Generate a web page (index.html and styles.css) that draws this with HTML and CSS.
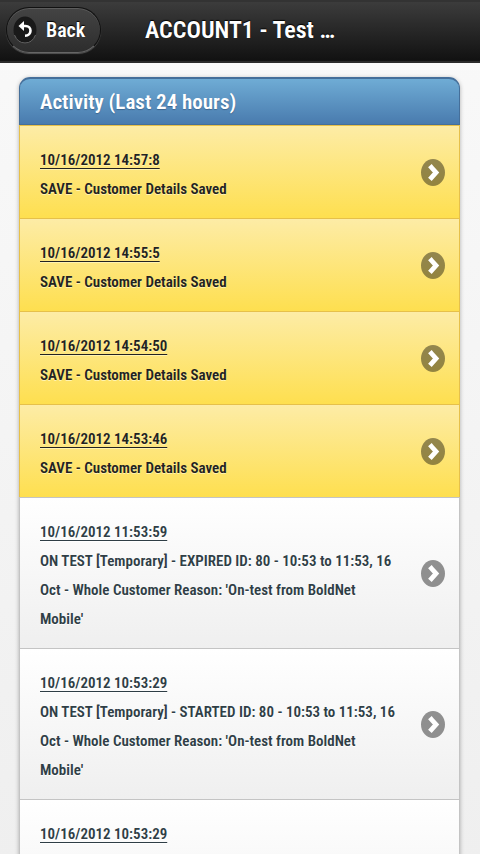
FILE: index.html
```html
<!DOCTYPE html>
<html lang="en">
<head>
  <meta charset="UTF-8">
  <meta name="viewport" content="width=device-width, initial-scale=1">
  <title>ACCOUNT1 - Test</title>
  <link rel="stylesheet" href="styles.css">
</head>
<body>

  <!-- Arrow used by every row -->
  <svg class="symbols" aria-hidden="true">
    <symbol id="arrow" viewBox="0 0 24 27">
      <ellipse cx="12" cy="13.5" rx="12" ry="13.5" fill="#000" fill-opacity="0.42"/>
      <path d="M10.5 8.5 L15 13.5 L10.5 18.5" fill="none" stroke="#fff" stroke-width="4.8" stroke-linecap="square"/>
    </symbol>
  </svg>

  <header class="header">
    <button type="button" class="back-button">
      <svg class="back-icon" viewBox="0 0 24 28" aria-hidden="true">
        <ellipse cx="12" cy="14" rx="11.5" ry="13.5" fill="#191919"/>
        <path d="M1.5 19 A11.5 13.5 0 0 0 22.5 19" fill="none" stroke="#666" stroke-width="1"/>
        <path d="M9 10 H12.5 C19 10 19.5 19.5 12 19.8" fill="none" stroke="#fff" stroke-width="2.6"/>
        <path d="M5.5 10 L11 5 V15 Z" fill="#fff"/>
      </svg>
      Back
    </button>
    <h1 class="title">ACCOUNT1 - Test …</h1>
  </header>

  <main class="content">
    <section class="list">
      <h2 class="list-header">Activity (Last 24 hours)</h2>
      <ul class="rows">
        <li>
          <a href="#" class="row warning">
            <span class="row-text"><span class="date">10/16/2012 14:57:8</span><span class="details">SAVE - Customer Details Saved</span></span>
            <svg class="arrow" aria-hidden="true"><use href="#arrow"/></svg>
          </a>
        </li>
        <li>
          <a href="#" class="row warning">
            <span class="row-text"><span class="date">10/16/2012 14:55:5</span><span class="details">SAVE - Customer Details Saved</span></span>
            <svg class="arrow" aria-hidden="true"><use href="#arrow"/></svg>
          </a>
        </li>
        <li>
          <a href="#" class="row warning">
            <span class="row-text"><span class="date">10/16/2012 14:54:50</span><span class="details">SAVE - Customer Details Saved</span></span>
            <svg class="arrow" aria-hidden="true"><use href="#arrow"/></svg>
          </a>
        </li>
        <li>
          <a href="#" class="row warning">
            <span class="row-text"><span class="date">10/16/2012 14:53:46</span><span class="details">SAVE - Customer Details Saved</span></span>
            <svg class="arrow" aria-hidden="true"><use href="#arrow"/></svg>
          </a>
        </li>
        <li>
          <a href="#" class="row">
            <span class="row-text"><span class="date">10/16/2012 11:53:59</span><span class="details">ON TEST [Temporary] - EXPIRED ID: 80 - 10:53 to 11:53, 16 Oct - Whole Customer Reason: 'On-test from BoldNet Mobile'</span></span>
            <svg class="arrow" aria-hidden="true"><use href="#arrow"/></svg>
          </a>
        </li>
        <li>
          <a href="#" class="row">
            <span class="row-text"><span class="date">10/16/2012 10:53:29</span><span class="details">ON TEST [Temporary] - STARTED ID: 80 - 10:53 to 11:53, 16 Oct - Whole Customer Reason: 'On-test from BoldNet Mobile'</span></span>
            <svg class="arrow" aria-hidden="true"><use href="#arrow"/></svg>
          </a>
        </li>
        <li>
          <a href="#" class="row">
            <span class="row-text"><span class="date">10/16/2012 10:53:29</span></span>
          </a>
        </li>
      </ul>
    </section>
  </main>

</body>
</html>
```
FILE: styles.css
```css
* {
  box-sizing: border-box;
}

body {
  margin: 0;
  font-family: "Roboto Condensed", Roboto, sans-serif;
  background: linear-gradient(#f9f9f9, #eeeeee);
}

.symbols {
  display: none;
}

.header {
  display: grid;
  grid-template-columns: 1fr auto 1fr;
  align-items: center;
  height: 63px;
  padding: 0 6px 4px;
  background: linear-gradient(#3c3c3c, #111111);
  border-top: 2px solid #333333;
  border-bottom: 2px solid #2a2a2a;
  color: #ffffff;
}

.back-button {
  display: flex;
  align-items: center;
  justify-self: start;
  gap: 9px;
  height: 46px;
  padding: 0 15px 0 6px;
  font-family: inherit;
  font-size: 20px;
  font-weight: 600;
  color: #ffffff;
  text-shadow: 0 -1px 1px #000000;
  background: linear-gradient(#444444, #2d2d2d);
  border: 1px solid #111111;
  border-bottom-color: #666666;
  border-radius: 23px;
  box-shadow: inset 0 1px 0 #5c5c5c, 0 1px 1px #555555;
  cursor: pointer;
}

.back-icon {
  width: 24px;
  height: 28px;
}

.title {
  margin: 0;
  font-size: 24px;
  font-weight: 600;
  line-height: 28px;
  text-shadow: 0 -1px 1px #000000;
}

.content {
  padding: 14px 20px 0 19px;
}

.list {
  border-radius: 11px 11px 0 0;
  box-shadow: 0 1px 4px rgba(0, 0, 0, 0.3);
}

.list-header {
  height: 48px;
  margin: 0;
  padding: 0 20px;
  font-size: 21px;
  font-weight: 600;
  line-height: 46px;
  color: #ffffff;
  text-shadow: 0 1px 1px #3e6790;
  background: linear-gradient(#6facd5, #497bae);
  border: 1px solid #456f9a;
  border-top-width: 2px;
  border-radius: 11px 11px 0 0;
}

.rows {
  margin: 0;
  padding: 0;
  list-style: none;
}

.row {
  display: flex;
  align-items: center;
  justify-content: space-between;
  padding: 20px 14px 14px 20px;
  font-size: 15px;
  font-weight: 600;
  line-height: 29px;
  color: #2f3e46;
  text-decoration: none;
  text-shadow: 0 1px 0 #ffffff;
  background: linear-gradient(#ffffff, #efefef);
  border: 1px solid #c4c4c4;
  border-bottom-width: 0;
}

.warning {
  color: #222222;
  text-shadow: 0 1px 0 #fff3b0;
  background: linear-gradient(#fdeca6, #fedf4f);
  border-color: #e6c04a;
}

.rows li:last-child .row {
  min-height: 151px;
  align-items: flex-start;
}

.row-text {
  max-width: 360px;
}

.date {
  display: block;
  text-decoration: underline;
  text-decoration-skip-ink: none;
  text-underline-offset: 3px;
}

.details {
  display: block;
}

.arrow {
  flex: none;
  width: 24px;
  height: 27px;
  margin-bottom: 6px;
}
```
